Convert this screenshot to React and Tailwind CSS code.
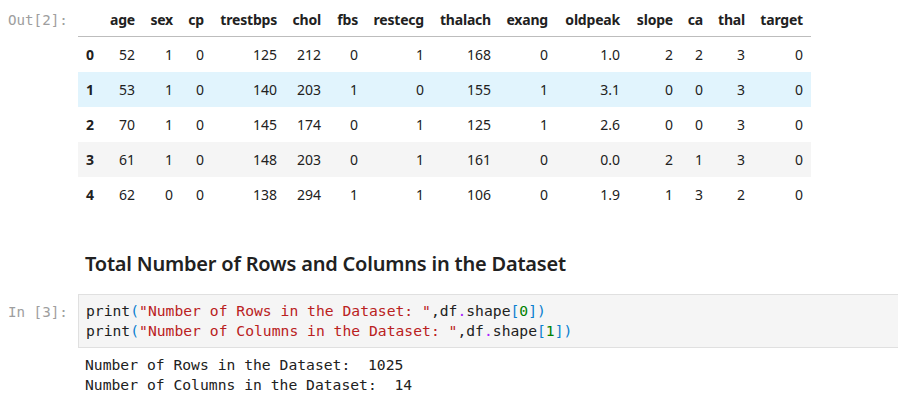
import React from "react";

const columns = ["", "age", "sex", "cp", "trestbps", "chol", "fbs", "restecg", "thalach", "exang", "oldpeak", "slope", "ca", "thal", "target"];

const rows = [
  [0, 52, 1, 0, 125, 212, 0, 1, 168, 0, "1.0", 2, 2, 3, 0],
  [1, 53, 1, 0, 140, 203, 1, 0, 155, 1, "3.1", 0, 0, 3, 0],
  [2, 70, 1, 0, 145, 174, 0, 1, 125, 1, "2.6", 0, 0, 3, 0],
  [3, 61, 1, 0, 148, 203, 0, 1, 161, 0, "0.0", 2, 1, 3, 0],
  [4, 62, 0, 0, 138, 294, 1, 1, 106, 0, "1.9", 1, 3, 2, 0],
];

// row 1 is hovered, row 3 is the plain stripe
const rowBg = (i) => (i === 1 ? "bg-[#e1f4fd]" : i % 2 === 1 ? "bg-[#f5f5f5]" : "bg-white");

const gridCols =
  "grid grid-cols-[24px_41px_38px_31px_73px_44px_37px_66px_67px_57px_72px_53px_30px_42px_58px]";

const mono = "font-['DejaVu_Sans_Mono',monospace]";

const Prompt = ({ children, className = "" }) => (
  <div className={`w-[78px] shrink-0 pl-2 text-[14.2px] text-[#9e9e9e] ${mono} ${className}`}>
    {children}
  </div>
);

const DataFrame = () => (
  <div className="w-[733px] text-[14px] text-[#212121] font-['Noto_Sans',sans-serif]">
    <div className={`${gridCols} h-[37px] items-center border-b border-[#bdbdbd] font-bold tracking-[-0.2px]`}>
      {columns.map((c, i) => (
        <div key={i} className="text-right pr-2 pt-[2px]">
          {c}
        </div>
      ))}
    </div>
    {rows.map((row, i) => (
      <div key={i} className={`${gridCols} h-[35px] items-center ${rowBg(i)}`}>
        {row.map((v, j) => (
          <div key={j} className={`text-right pr-2 ${j === 0 ? "font-bold" : ""}`}>
            {v}
          </div>
        ))}
      </div>
    ))}
  </div>
);

const CodeLine = ({ label, idx }) => (
  <div>
    <span className="text-[#212121]">print</span>
    <span className="text-[#0b7fd0]">(</span>
    <span className="text-[#ba2121]">"Number of {label} in the Dataset: "</span>
    <span className="text-[#212121]">,df</span>
    <span className="text-[#aa22ff]">.</span>
    <span className="text-[#212121]">shape</span>
    <span className="text-[#0b7fd0]">[</span>
    <span className="text-[#008000]">{idx}</span>
    <span className="text-[#0b7fd0]">])</span>
  </div>
);

export default function App() {
  return (
    <div className="w-[898px] h-[412px] overflow-hidden bg-white">
      {/* Out[2] */}
      <div className="flex">
        <Prompt className="pt-[10px]">Out[2]:</Prompt>
        <DataFrame />
      </div>

      {/* Markdown heading */}
      <div className="flex mt-[38px]">
        <div className="w-[78px] shrink-0" />
        <h3 className="pl-[7px] text-[20px] leading-[28px] font-semibold tracking-[-0.2px] text-[#212121] font-['Noto_Sans',sans-serif]">
          Total Number of Rows and Columns in the Dataset
        </h3>
      </div>

      {/* In [3] */}
      <div className="flex mt-[16px]">
        <Prompt className="pt-[8px]">In&nbsp;[3]:</Prompt>
        <div
          className={`flex-1 -mr-[2px] h-[54px] border border-[#e0e0e0] bg-[#f5f5f5] px-[7px] py-[6px] text-[14.7px] leading-[20px] whitespace-pre ${mono}`}
        >
          <CodeLine label="Rows" idx={0} />
          <CodeLine label="Columns" idx={1} />
        </div>
      </div>

      {/* stdout */}
      <div className="flex mt-[7px]">
        <div className="w-[78px] shrink-0" />
        <div className={`pl-[7px] text-[14.7px] leading-[20px] text-[#212121] whitespace-pre ${mono}`}>
          <div>Number of Rows in the Dataset:  1025</div>
          <div>Number of Columns in the Dataset:  14</div>
        </div>
      </div>
    </div>
  );
}
